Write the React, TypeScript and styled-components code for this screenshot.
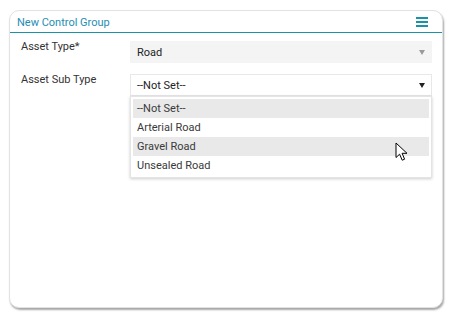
import styled, { createGlobalStyle } from "styled-components";

const GlobalStyle = createGlobalStyle`
  html, body {
    margin: 0;
    padding: 0;
    background: #ffffff;
  }
  body {
    font-family: Roboto, "Liberation Sans", sans-serif;
    font-size: 11px;
    color: #333333;
  }
`;

const subTypes = ["--Not Set--", "Arterial Road", "Gravel Road", "Unsealed Road"];

export default function App() {
  return (
    <>
      <GlobalStyle />
      <Page>
        <Card>
          <Header>
            <Title>New Control Group</Title>
            <MenuButton aria-label="menu">
              <svg width="12" height="10" viewBox="0 0 12 10">
                <rect x="0" y="0" width="12" height="2" fill="#1a93a8" />
                <rect x="0" y="4" width="12" height="2" fill="#1a93a8" />
                <rect x="0" y="8" width="12" height="2" fill="#1a93a8" />
              </svg>
            </MenuButton>
          </Header>
          <Body>
            <FieldRow>
              <Label>Asset Type*</Label>
              <Select $disabled>
                <span>Road</span>
                <Arrow $color="#9a9a9a" />
              </Select>
            </FieldRow>
            <FieldRow>
              <Label>Asset Sub Type</Label>
              <SelectWrap>
                <Select>
                  <span>--Not Set--</span>
                  <Arrow $color="#222222" />
                </Select>
                <Dropdown>
                  {subTypes.map((t, i) => (
                    <Option key={t} $active={i === 0 || i === 2}>
                      {t}
                    </Option>
                  ))}
                  <Cursor width="14" height="20" viewBox="0 0 14 20">
                    <path
                      d="M1 1 L1 15.5 L4.6 12.2 L7.2 18.2 L9.6 17.2 L7.1 11.3 L12 11.3 Z"
                      fill="#ffffff"
                      stroke="#000000"
                      strokeWidth="1"
                      strokeLinejoin="miter"
                    />
                  </Cursor>
                </Dropdown>
              </SelectWrap>
            </FieldRow>
          </Body>
        </Card>
      </Page>
    </>
  );
}

const Page = styled.div`
  width: 451px;
  height: 318px;
  padding: 10px 8px 10px 9px;
  box-sizing: border-box;
`;

const Card = styled.div`
  width: 434px;
  height: 298px;
  box-sizing: border-box;
  background: #ffffff;
  border-radius: 10px;
  border: 1px solid #e2e2e2;
  box-shadow: 1px 2px 2px rgba(0, 0, 0, 0.35);
  display: flex;
  flex-direction: column;
`;

const Header = styled.div`
  height: 21px;
  display: flex;
  align-items: center;
  justify-content: space-between;
  padding: 0 14px 0 7px;
  border-bottom: 1.5px solid #1a93a8;
`;

const Title = styled.div`
  font-size: 11px;
  color: #1e8db4;
  padding-top: 1px;
`;

const MenuButton = styled.div`
  display: flex;
  padding-top: 1px;
`;

const Body = styled.div`
  display: flex;
  flex-direction: column;
  gap: 11px;
  padding: 8px 10px 0 11px;
`;

const FieldRow = styled.div`
  display: grid;
  grid-template-columns: 109px 1fr;
  align-items: start;
`;

const Label = styled.div`
  line-height: 13px;
  margin-top: -1px;
`;

const SelectWrap = styled.div`
  position: relative;
`;

const Select = styled.div<{ $disabled?: boolean }>`
  height: 22px;
  box-sizing: border-box;
  display: flex;
  align-items: center;
  justify-content: space-between;
  padding: 0 6px 0 6px;
  background: ${(p) => (p.$disabled ? "#f4f4f4" : "#ffffff")};
  border: 1px solid ${(p) => (p.$disabled ? "#f4f4f4" : "#e8e8e8")};
  color: #222222;
`;

const Arrow = styled.span<{ $color: string }>`
  width: 0;
  height: 0;
  border-left: 3.5px solid transparent;
  border-right: 3.5px solid transparent;
  border-top: 5px solid ${(p) => p.$color};
`;

const Dropdown = styled.div`
  position: absolute;
  top: 22px;
  left: 0;
  right: 0;
  background: #ffffff;
  border: 1px solid #e4e4e4;
  box-shadow: 0 1px 3px rgba(0, 0, 0, 0.2);
  padding: 2px;
  display: flex;
  flex-direction: column;
  z-index: 2;
`;

const Option = styled.div<{ $active?: boolean }>`
  height: 19px;
  display: flex;
  align-items: center;
  padding: 0 4px;
  background: ${(p) => (p.$active ? "#e9e9e9" : "transparent")};
  color: #3a3a3a;
`;

const Cursor = styled.svg`
  position: absolute;
  left: 264px;
  top: 45px;
`;
